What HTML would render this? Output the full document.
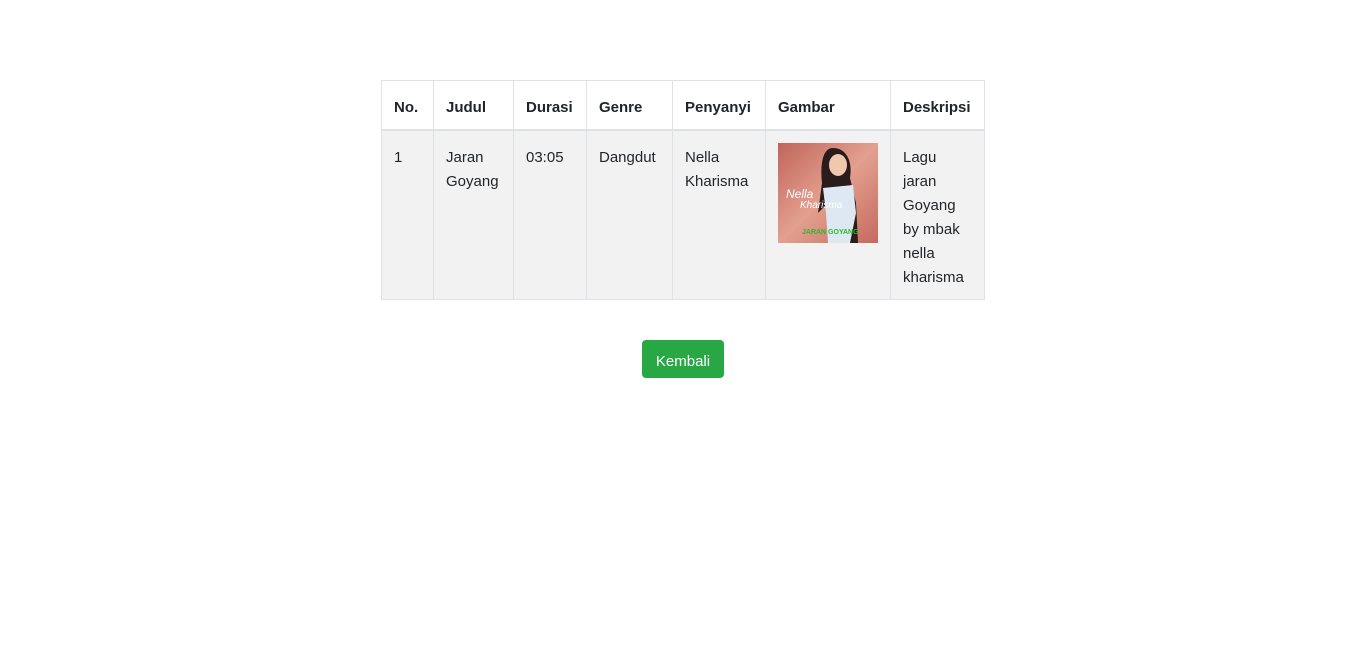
<!DOCTYPE html>
<html><head><meta charset="utf-8"><style>
body{margin:0;background:#fff;font-family:"Liberation Sans",sans-serif;color:#212529;font-size:15px;}
table{position:absolute;left:381px;top:80px;border-collapse:collapse;table-layout:fixed;width:603px;}
td,th{border:1px solid #dee2e6;padding:15px 12px 9px;vertical-align:top;line-height:24px;text-align:left;white-space:nowrap;overflow:hidden}
th{height:24px;font-weight:bold;border-bottom:2px solid #dee2e6;}
tbody tr{background:#f2f2f2;}
tbody td{height:144px;}
td.img{padding-top:12px;padding-bottom:12px;}
.btn{position:absolute;left:642px;top:340px;width:82px;height:35px;padding-top:3px;background:#28a745;color:#fff;border-radius:4px;text-align:center;line-height:38px;font-size:15px;}
</style></head><body>
<table>
<colgroup><col style="width:52px"><col style="width:80px"><col style="width:73px"><col style="width:86px"><col style="width:93px"><col style="width:125px"><col style="width:94px"></colgroup>
<thead><tr><th>No.</th><th>Judul</th><th>Durasi</th><th>Genre</th><th>Penyanyi</th><th>Gambar</th><th>Deskripsi</th></tr></thead>
<tbody><tr><td>1</td><td>Jaran<br>Goyang</td><td>03:05</td><td>Dangdut</td><td>Nella<br>Kharisma</td>
<td class="img"><svg width="100" height="100" viewBox="0 0 100 100" style="display:block">
<defs><linearGradient id="g" x1="0" y1="0" x2="1" y2="1"><stop offset="0" stop-color="#c0645a"/><stop offset=".5" stop-color="#e3a08e"/><stop offset="1" stop-color="#c46a5e"/></linearGradient></defs>
<rect width="100" height="100" fill="url(#g)"/>
<path d="M55 5 C45 5 42 20 44 40 L40 70 L50 60 L55 100 L80 100 L78 60 L72 35 C75 18 68 5 55 5Z" fill="#2a1c1c"/>
<ellipse cx="60" cy="22" rx="9" ry="11" fill="#f0c8b0"/>
<path d="M45 45 L75 42 L78 70 L72 100 L50 100 L48 70Z" fill="#dde8f2"/>
<text x="8" y="55" font-size="12" fill="#fff" font-style="italic">Nella</text>
<text x="22" y="65" font-size="10" fill="#fff" font-style="italic">Kharisma</text>
<text x="24" y="91" font-size="7" fill="#2db82d" font-weight="bold">JARAN GOYANG</text>
</svg></td>
<td>Lagu<br>jaran<br>Goyang<br>by mbak<br>nella<br>kharisma</td></tr></tbody></table>
<div class="btn">Kembali</div>
</body></html>
